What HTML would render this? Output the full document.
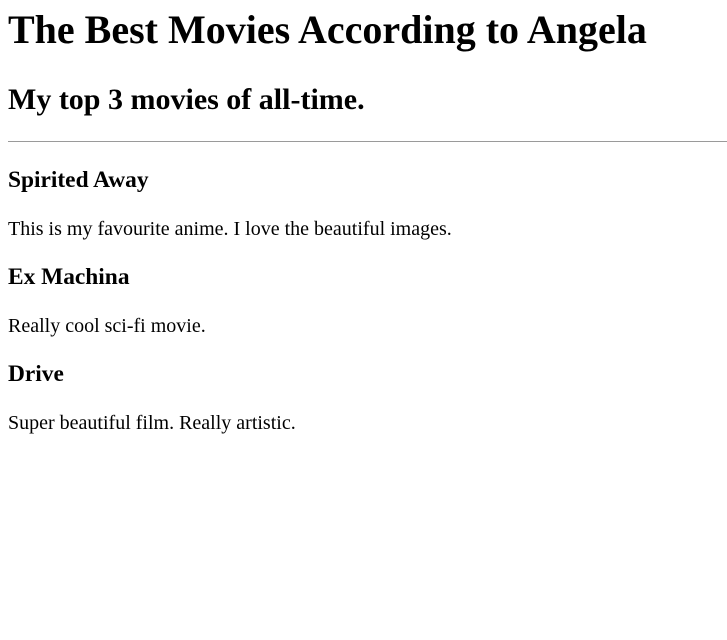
<!DOCTYPE html>
<html><head><meta charset="utf-8"><style>
html,body{margin:0;padding:0;}
body{padding:0 0 0 8px;font-family:"Liberation Serif",serif;background:#fff;color:#000;font-size:20px;}
h1{font-size:40px;margin:7px 0 29px;line-height:46px;}
h2{font-size:30px;margin:25px 0 24px;line-height:35px;}
h3{font-size:23.4px;margin:23px 0 24px;line-height:27px;}
p{margin:20px 0;line-height:23px;}
hr{border:none;border-top:1px solid #9a9a9a;margin:0 0 25px 0;height:0;}
</style></head><body>
<h1>The Best Movies According to Angela</h1>
<h2>My top 3 movies of all-time.</h2>
<hr>
<h3>Spirited Away</h3>
<p>This is my favourite anime. I love the beautiful images.</p>
<h3>Ex Machina</h3>
<p>Really cool sci-fi movie.</p>
<h3>Drive</h3>
<p>Super beautiful film. Really artistic.</p>
</body></html>
